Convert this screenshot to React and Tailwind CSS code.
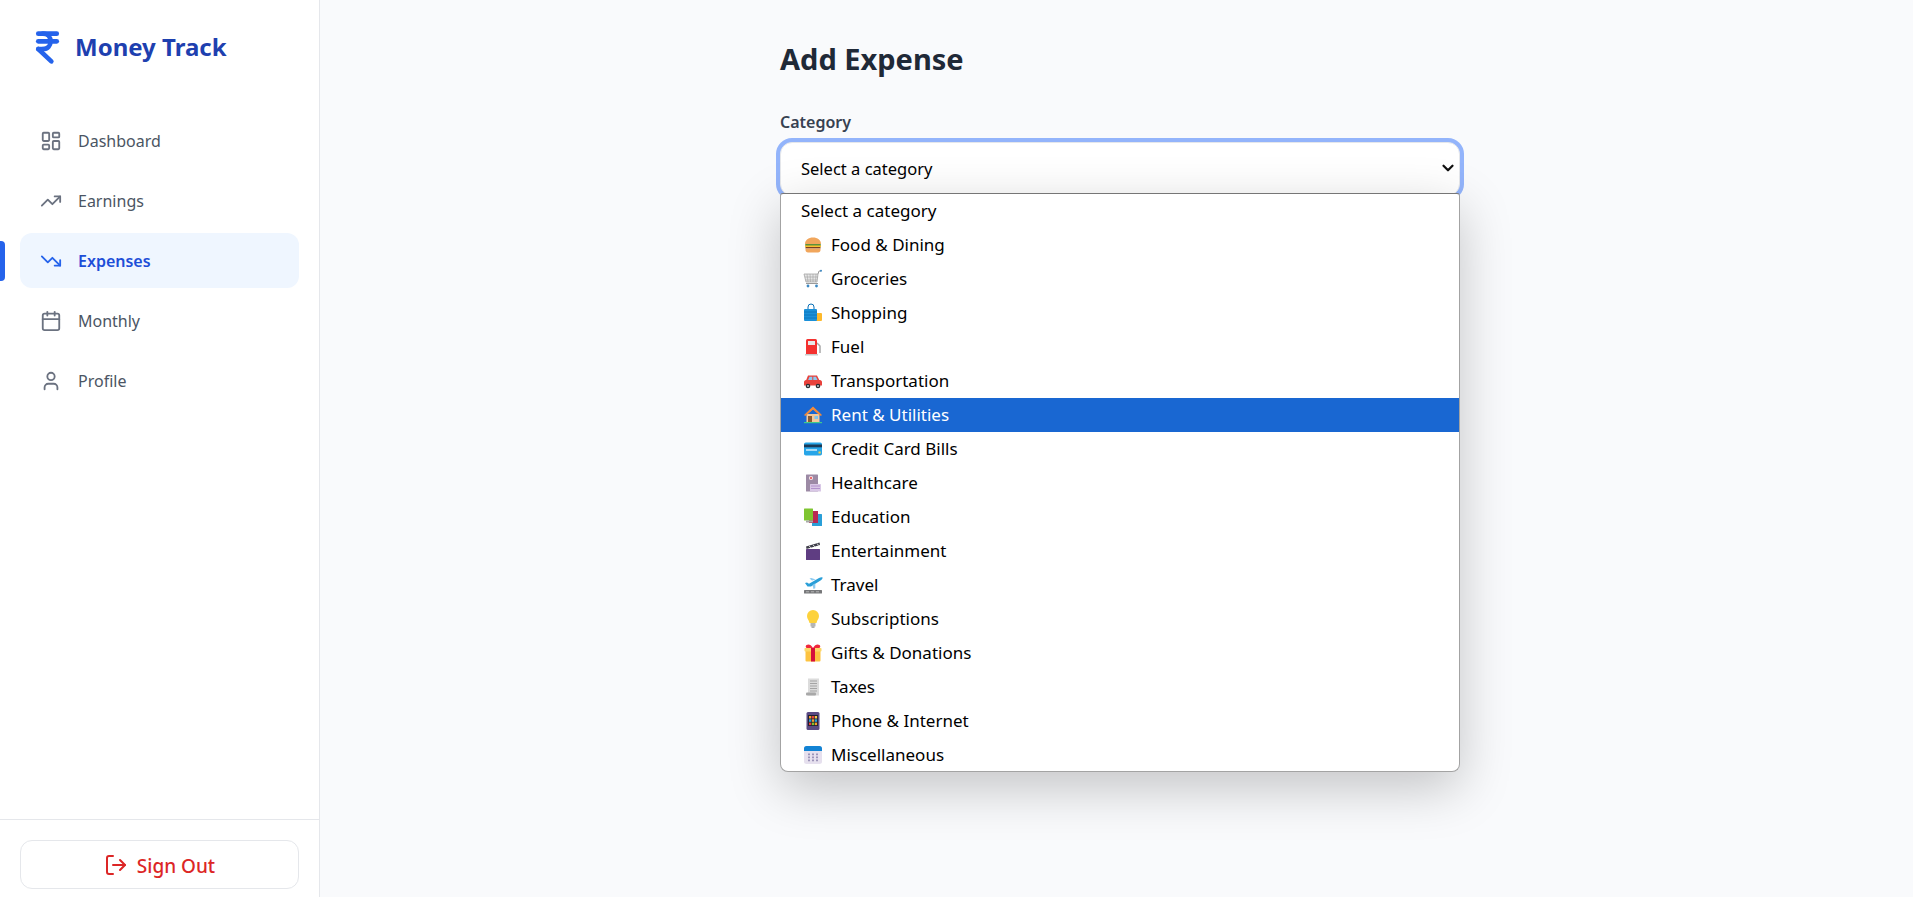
import React from 'react';
import { LayoutDashboard, TrendingUp, TrendingDown, Calendar, User, LogOut, IndianRupee, ChevronDown } from 'lucide-react';

const NAV = [
  { label: 'Dashboard', icon: LayoutDashboard },
  { label: 'Earnings', icon: TrendingUp },
  { label: 'Expenses', icon: TrendingDown, active: true },
  { label: 'Monthly', icon: Calendar },
  { label: 'Profile', icon: User },
];

/* emoji glyphs drawn by hand, there is no colour emoji font here */
const Burger = () => (
  <svg viewBox="0 0 20 20" className="w-5 h-5">
    <path d="M2 9c0-4 3.500-6.500 8-6.500S18 5 18 9z" fill="#f1a65c" />
    <rect x="2" y="9" width="16" height="2" rx="1" fill="#5c913b" />
    <rect x="2" y="10.500" width="16" height="1.500" fill="#f9c22e" />
    <rect x="2.500" y="12" width="15" height="1.500" fill="#7a3f1f" />
    <path d="M2.500 13.500h15V15c0 1.500-1 2.500-2.500 2.500H5C3.500 17.500 2.500 16.500 2.500 15z" fill="#f1a65c" />
  </svg>
);
const Cart = () => (
  <svg viewBox="0 0 20 20" className="w-5 h-5">
    <path d="M1 5h14l-1 8H3z" fill="#e6e6e6" stroke="#a3a3a3" strokeWidth="0.800" />
    <path d="M4 5l1 8M7 5l.5 8M10 5v8M13 5l-.5 8M2 8h13M2.500 11H14" stroke="#a3a3a3" strokeWidth="0.600" fill="none" />
    <path d="M15 5l1-3h2M3 14.500h12" stroke="#9a9a9a" strokeWidth="1" fill="none" />
    <circle cx="18" cy="1.800" r="1" fill="#3b88c3" />
    <circle cx="5" cy="17" r="1.400" fill="#3b88c3" />
    <circle cx="13.500" cy="17" r="1.400" fill="#3b88c3" />
  </svg>
);
const Bags = () => (
  <svg viewBox="0 0 20 20" className="w-5 h-5">
    <rect x="10" y="10" width="9" height="8" rx="1" fill="#fdb92c" />
    <path d="M5 6V4a3 3 0 0 1 6 0v2" stroke="#0a6fb5" strokeWidth="1" fill="none" />
    <rect x="1" y="6" width="13" height="12" rx="1" fill="#1a90d9" />
    <path d="M1 9h13M1 12h13M1 15h13" stroke="#0a6fb5" strokeWidth="0.800" />
  </svg>
);
const Pump = () => (
  <svg viewBox="0 0 20 20" className="w-5 h-5">
    <path d="M14 6l3 3v7" stroke="#a8a8a8" strokeWidth="1.500" fill="none" />
    <rect x="3" y="2" width="11" height="16" rx="1.500" fill="#f4312f" />
    <rect x="5" y="4" width="7" height="4" fill="#e8e8e8" />
    <rect x="2" y="17" width="13" height="1.500" fill="#c9c9c9" />
  </svg>
);
const Car = () => (
  <svg viewBox="0 0 20 20" className="w-5 h-5">
    <path d="M5 4.500h9l2.500 5H3z" fill="#e8413b" />
    <path d="M6.500 5.800h2.800v3.500H5zM10.300 5.800H13l1.600 3.500h-4.300z" fill="#8ccaf0" />
    <path d="M1 11c0-1 1-2 2-2h14c1 0 2 1 2 2v3.500H1z" fill="#e8413b" />
    <circle cx="5" cy="15" r="2.300" fill="#292f33" />
    <circle cx="15" cy="15" r="2.300" fill="#292f33" />
    <circle cx="5" cy="15" r="0.900" fill="#ccd6dd" />
    <circle cx="15" cy="15" r="0.900" fill="#ccd6dd" />
  </svg>
);
const House = () => (
  <svg viewBox="0 0 20 20" className="w-5 h-5">
    <rect x="3.500" y="9" width="13" height="8" fill="#f3c99a" />
    <path d="M10 1.500L1 10l1.200 1L10 4.500l7.800 6.500 1.200-1z" fill="#f08a3c" />
    <path d="M10 4.500L3.500 10V8l6.500-6 6.500 6v2z" fill="#f08a3c" />
    <rect x="5" y="11" width="4" height="6" fill="#8a5a33" />
    <rect x="11.500" y="11" width="3.500" height="3" fill="#7fc4ee" />
    <rect x="1" y="17" width="18" height="1.200" fill="#3ecb8a" />
  </svg>
);
const CardIcon = () => (
  <svg viewBox="0 0 20 20" className="w-5 h-5">
    <rect x="1" y="3.500" width="18" height="13" rx="1.800" fill="#27a5e8" />
    <rect x="1" y="5.500" width="18" height="2.800" fill="#1b3a57" />
    <rect x="3" y="10" width="11" height="2" fill="#a9dcf6" />
    <rect x="15.500" y="12.500" width="2.200" height="2" fill="#f7d44c" />
  </svg>
);
const Hospital = () => (
  <svg viewBox="0 0 20 20" className="w-5 h-5">
    <rect x="3" y="1.500" width="12" height="17" rx="0.500" fill="#9c8aa5" />
    <circle cx="8" cy="5" r="2" fill="#fff" />
    <path d="M7.400 3.800h1.200v2.400H7.400zM6.800 4.400h2.400v1.200H6.800z" fill="#e5484d" />
    <rect x="7" y="11" width="11" height="7.500" rx="0.500" fill="#d9c8e6" />
    <path d="M8 13h9M8 15.500h9" stroke="#a884c4" strokeWidth="0.800" />
  </svg>
);
const Books = () => (
  <svg viewBox="0 0 20 20" className="w-5 h-5">
    <rect x="9" y="7" width="10" height="12" rx="0.500" fill="#2a9fd8" />
    <rect x="6" y="4" width="9" height="12" fill="#b92a54" />
    <rect x="1" y="1.500" width="9" height="12" rx="0.500" fill="#7fc531" />
    <rect x="3" y="13.500" width="7" height="2" fill="#a8a8a8" />
  </svg>
);
const Clapper = () => (
  <svg viewBox="0 0 20 20" className="w-5 h-5">
    <rect x="3" y="8" width="14" height="11" rx="0.500" fill="#5f3d82" />
    <path d="M3 5.500L16.500 1.500l.5 2.500L3.500 8z" fill="#3f3f4a" />
    <path d="M6 5l2 1.800M10 4l2 1.800M14 2.800l2 1.800" stroke="#d8d8d8" strokeWidth="1" />
  </svg>
);
const Plane = () => (
  <svg viewBox="0 0 20 20" className="w-5 h-5">
    <path d="M2 8l2-.500 2 1.300 10-5.800c1-.500 3-1 3.500-.500s-.500 2-2 3L8 11.500H4.500z" fill="#2a9fd8" />
    <path d="M9 5.500l-2.500-2 1.800-.500 4.500 1.500z" fill="#8ccaf0" />
    <path d="M9.500 10l1 4 1.800-.800 0-5z" fill="#8ccaf0" />
    <rect x="1" y="15" width="18" height="3.500" rx="0.500" fill="#77787a" />
    <path d="M3 16.800h3M8 16.800h3M13 16.800h3" stroke="#d0d0d0" strokeWidth="0.700" />
  </svg>
);
const Bulb = () => (
  <svg viewBox="0 0 20 20" className="w-5 h-5">
    <path d="M10 1a6 6 0 0 0-6 6c0 3 2 4 2.500 7h7c.5-3 2.500-4 2.500-7a6 6 0 0 0-6-6z" fill="#fdd23c" />
    <rect x="7.500" y="14" width="5" height="3.500" rx="0.500" fill="#b5b5b5" />
    <rect x="8.500" y="17.500" width="3" height="1.200" fill="#8d8d8d" />
  </svg>
);
const Gift = () => (
  <svg viewBox="0 0 20 20" className="w-5 h-5">
    <rect x="2.500" y="7" width="15" height="11.500" rx="1" fill="#fdc340" />
    <rect x="1.500" y="5" width="17" height="3.500" rx="0.800" fill="#fdd768" />
    <rect x="8" y="5" width="4" height="13.500" fill="#d6103c" />
    <path d="M10 5C8 1 5 1 3.500 2S3 5 4 5zM10 5c2-4 5-4 6.500-3S17 5 16 5z" fill="#f0283c" />
  </svg>
);
const Receipt = () => (
  <svg viewBox="0 0 20 20" className="w-5 h-5">
    <rect x="5" y="1.500" width="11" height="17" fill="#dcdcdc" />
    <path d="M7 4h7M7 6.500h7M7 9h7M7 11.500h7M7 14h7" stroke="#a4a4a4" strokeWidth="1" />
    <rect x="3" y="15.500" width="10" height="3" rx="1" fill="#a8a8a8" />
  </svg>
);
const Phone = () => (
  <svg viewBox="0 0 20 20" className="w-5 h-5">
    <rect x="3.500" y="1" width="13" height="18" rx="1.500" fill="#5a4a82" />
    <rect x="5" y="4" width="10" height="11" fill="#1f2030" />
    <rect x="6" y="5" width="2.300" height="2.500" fill="#f59e2c" />
    <rect x="8.900" y="5" width="2.300" height="2.500" fill="#e8413b" />
    <rect x="11.800" y="5" width="2.300" height="2.500" fill="#f7c948" />
    <rect x="6" y="8.300" width="2.300" height="2.500" fill="#2a9fd8" />
    <rect x="8.900" y="8.300" width="2.300" height="2.500" fill="#f59e2c" />
    <rect x="11.800" y="8.300" width="2.300" height="2.500" fill="#2a9fd8" />
    <rect x="6" y="11.600" width="2.300" height="2.500" fill="#e8413b" />
    <rect x="8.900" y="11.600" width="2.300" height="2.500" fill="#7fc531" />
    <rect x="11.800" y="11.600" width="2.300" height="2.500" fill="#f59e2c" />
  </svg>
);
const Cal = () => (
  <svg viewBox="0 0 20 20" className="w-5 h-5">
    <rect x="1" y="1" width="18" height="18" rx="2.500" fill="#e6e0ee" />
    <path d="M1 6V3.500A2.500 2.500 0 0 1 3.500 1h13A2.500 2.500 0 0 1 19 3.500V6z" fill="#1283d4" />
    <path d="M5 8.500h2v1.800H5zM9 8.500h2v1.800H9zM13 8.500h2v1.800h-2zM5 11.500h2v1.800H5zM9 11.500h2v1.800H9zM13 11.500h2v1.800h-2zM5 14.500h2v1.800H5zM9 14.500h2v1.800H9zM13 14.500h2v1.800h-2z" fill="#9c93b8" />
  </svg>
);

const OPTIONS = [
  { label: 'Food & Dining', icon: Burger },
  { label: 'Groceries', icon: Cart },
  { label: 'Shopping', icon: Bags },
  { label: 'Fuel', icon: Pump },
  { label: 'Transportation', icon: Car },
  { label: 'Rent & Utilities', icon: House, selected: true },
  { label: 'Credit Card Bills', icon: CardIcon },
  { label: 'Healthcare', icon: Hospital },
  { label: 'Education', icon: Books },
  { label: 'Entertainment', icon: Clapper },
  { label: 'Travel', icon: Plane },
  { label: 'Subscriptions', icon: Bulb },
  { label: 'Gifts & Donations', icon: Gift },
  { label: 'Taxes', icon: Receipt },
  { label: 'Phone & Internet', icon: Phone },
  { label: 'Miscellaneous', icon: Cal },
];

const Sidebar = () => (
  <aside className="w-[320px] h-full shrink-0 bg-white border-r border-[#e5e7eb] flex flex-col">
    <div className="h-[94px] pl-[29px] flex items-center gap-[9px]">
      <IndianRupee size={37} strokeWidth={3} className="text-[#2563eb]" />
      <span className="text-[24px] font-bold text-[#1e40af]">Money Track</span>
    </div>
    <nav className="flex-1 pt-[19px] flex flex-col gap-[5px]">
      {NAV.map(({ label, icon: Icon, active }) => (
        <div key={label} className="relative h-[55px] pl-[20px] pr-[20px]">
          {active && <div className="absolute left-0 top-[8px] w-[5px] h-[40px] bg-[#2563eb] rounded-r-[4px]" />}
          <div className={`h-full rounded-xl pl-[20px] flex items-center gap-[16px] text-[16px] ${active ? 'bg-[#eff6ff] text-[#1d4ed8] font-semibold' : 'text-[#4b5563]'}`}>
            <Icon size={22} strokeWidth={2} className={active ? 'text-[#2563eb]' : 'text-[#6b7280]'} />
            <span>{label}</span>
          </div>
        </div>
      ))}
    </nav>
    <div className="border-t border-[#e5e7eb] px-[20px] pt-[20px] pb-[8px]">
      <button className="w-full h-[49px] bg-white border border-[#e5e7eb] rounded-xl flex items-center justify-center gap-[9px] text-[19px] font-medium text-[#dc2626]">
        <LogOut size={24} strokeWidth={2} className="scale-x-[-1] rotate-180" />
        <span className="pt-[3px]">Sign Out</span>
      </button>
    </div>
  </aside>
);

const CategoryPopup = () => (
  <div className="absolute left-0 top-[51px] w-[680px] h-[579px] bg-white border border-[#a3a3a3] border-t-[#767676] rounded-b-lg rounded-t-[3px] shadow-[0_16px_52px_rgba(0,0,0,0.22)] overflow-hidden text-[17px] text-black">
    <div className="h-[34px] pl-[20px] flex items-center">Select a category</div>
    {OPTIONS.map(({ label, icon: Icon, selected }) => (
      <div key={label} className={`h-[34px] pl-[22px] flex items-center gap-[8px] ${selected ? 'bg-[#1967d2] text-white' : ''}`}>
        <Icon />
        <span>{label}</span>
      </div>
    ))}
  </div>
);

export default function App() {
  return (
    <div className="w-full h-[897px] flex overflow-hidden bg-[#f9fafc] font-['Noto_Sans','Liberation_Sans',sans-serif]">
      <Sidebar />
      <main className="flex-1 pl-[460px] pt-[39px]">
        <div className="w-[680px]">
          <h1 className="text-[29px] leading-[40px] font-bold text-[#1f2937]">Add Expense</h1>
          <label className="block mt-[31px] text-[16px] leading-[24px] font-semibold text-[#374151]">Category</label>
          <div className="relative mt-[8px]">
            <select className="block appearance-none w-full h-[54px] pl-[20px] pr-[8px] bg-white text-[16.500px] text-black border border-[#e5e7eb] rounded-xl outline-none ring-4 ring-[#93b4fb]">
              <option>Select a category</option>
            </select>
            <ChevronDown size={18} strokeWidth={3} className="absolute right-[3px] top-[17px] text-[#111]" />
            <CategoryPopup />
          </div>
          <button className="block w-full h-[40px] mt-[376px] bg-[#2563eb] rounded-lg" />
        </div>
      </main>
    </div>
  );
}
